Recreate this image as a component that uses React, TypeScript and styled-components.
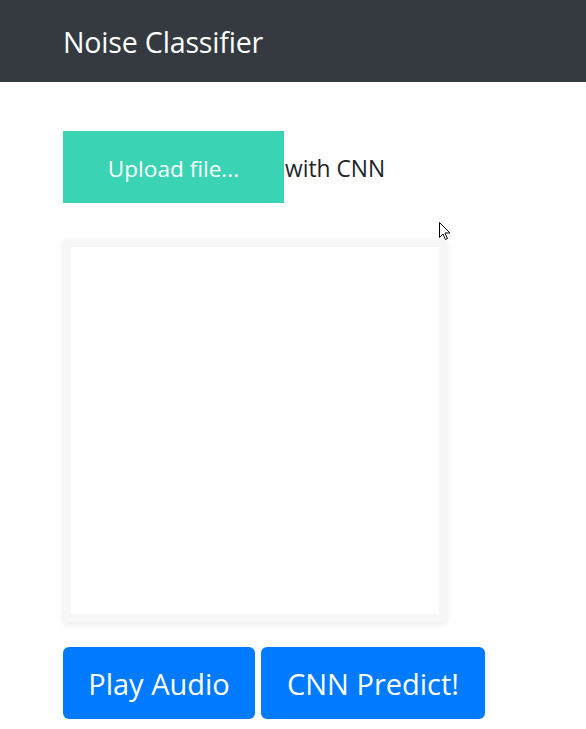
import React from "react";
import styled, { createGlobalStyle } from "styled-components";

const Global = createGlobalStyle`
  html, body { margin: 0; padding: 0; background: #fff; }
  body { font-family: "Open Sans", "Noto Sans", sans-serif; color: #212529; }
`;

const Page = styled.div`
  position: relative;
  width: 586px;
  min-height: 729px;
`;

const NavBar = styled.header`
  height: 82px;
  background: #343a40;
  display: flex;
  align-items: center;
  padding-left: 63px;
`;

const Brand = styled.span`
  color: #fff;
  font-size: 28.6px;
  line-height: 1;
  margin-top: 2px;
  letter-spacing: -0.2px;
`;

const Main = styled.main`
  padding: 49px 63px 0;
  display: flex;
  flex-direction: column;
`;

const UploadRow = styled.div`
  display: flex;
  align-items: center;
  height: 72px;
`;

const UploadButton = styled.label`
  width: 221px;
  height: 72px;
  background: #3ad3b4;
  color: #fff;
  font-size: 22.6px;
  display: flex;
  align-items: center;
  justify-content: center;
  padding-top: 2px;
  box-sizing: border-box;
  cursor: pointer;
`;

const Caption = styled.span`
  font-size: 22.8px;
  color: #212529;
  margin-left: 1px;
  padding-top: 2px;
`;

const Card = styled.div`
  margin-top: 37px;
  width: 384px;
  height: 382px;
  box-sizing: border-box;
  border: 8px solid #f7f7f7;
  border-top-width: 7px;
  background: #fff;
  box-shadow: 0 2px 6px rgba(0, 0, 0, 0.08);
`;

const ButtonRow = styled.div`
  margin-top: 25px;
  display: flex;
  gap: 6px;
`;

const PrimaryButton = styled.button<{ $w: number }>`
  width: ${(p) => p.$w}px;
  height: 72px;
  border: none;
  border-radius: 6px;
  background: #007bff;
  color: #fff;
  font-family: "Open Sans", "Noto Sans", sans-serif;
  font-size: 29px;
  padding: 1px 0 0;
  cursor: pointer;
`;

const Cursor = styled.svg`
  position: absolute;
  left: 438px;
  top: 221px;
`;

export default function App() {
  return (
    <Page>
      <Global />
      <NavBar>
        <Brand>Noise Classifier</Brand>
      </NavBar>
      <Main>
        <UploadRow>
          <UploadButton>Upload file...</UploadButton>
          <Caption>with CNN</Caption>
        </UploadRow>
        <Card />
        <ButtonRow>
          <PrimaryButton $w={192}>Play Audio</PrimaryButton>
          <PrimaryButton $w={224}>CNN Predict!</PrimaryButton>
        </ButtonRow>
      </Main>
      <Cursor width="14" height="22" viewBox="0 0 14 22">
        <path
          d="M1.5 1.5 L1.5 16.5 L5 13 L7.5 18.5 L9.5 17.5 L7 12 L12 12 Z"
          fill="#fff"
          stroke="#000"
          strokeWidth="1"
          strokeLinejoin="miter"
        />
      </Cursor>
    </Page>
  );
}
